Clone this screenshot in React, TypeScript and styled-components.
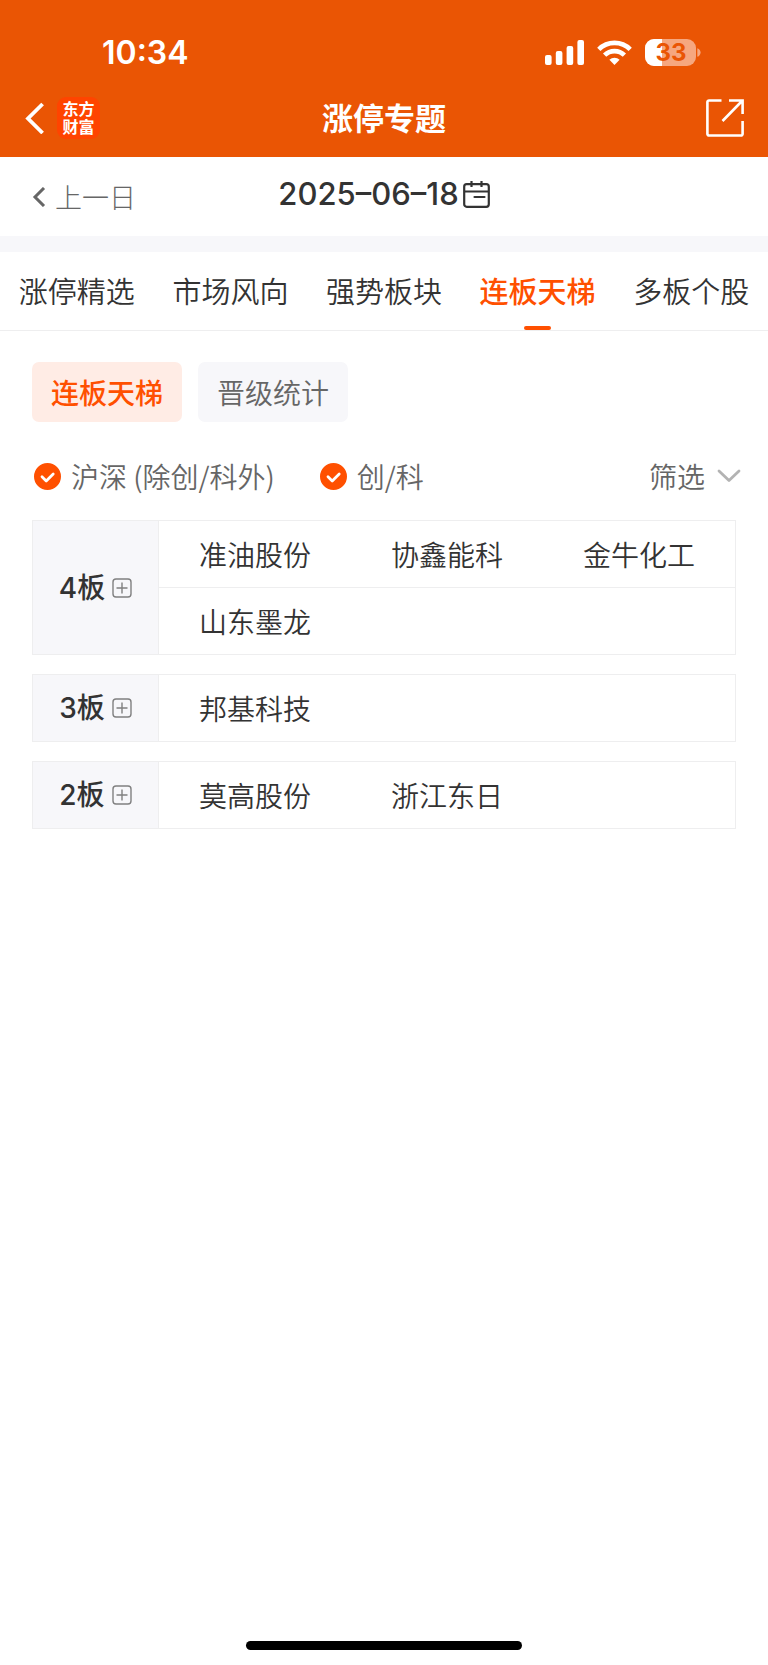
import React, { useState } from "react";
import styled, { createGlobalStyle } from "styled-components";

const color = {
  header: "#ea5504",
  accent: "#ff5000",
  accentSoft: "#ffece5",
  ink: "#333333",
  muted: "#666666",
  faint: "#b3b3b3",
  panel: "#f7f7fa",
  line: "#eeeeef",
};

const latin = `Inter, "Noto Sans CJK SC", sans-serif`;

const GlobalStyle = createGlobalStyle`
  *, *::before, *::after { box-sizing: border-box; }
  body {
    margin: 0;
    background: #fff;
    color: ${color.ink};
    font-family: "Noto Sans CJK SC", Inter, sans-serif;
    font-size: 28px;
    font-weight: 350;
    line-height: 40px;
  }
  button {
    margin: 0;
    padding: 0;
    border: 0;
    background: none;
    color: inherit;
    font: inherit;
    cursor: pointer;
  }
  svg { display: block; flex: none; }
`;

const Page = styled.div`
  min-height: 100vh;
  display: flex;
  flex-direction: column;
`;

const Header = styled.header`
  background: ${color.header};
  color: #fff;
`;

const StatusBar = styled.div`
  display: flex;
  align-items: center;
  justify-content: space-between;
  height: 79px;
  padding: 25px 67px 0 102px;
`;

const Clock = styled.time`
  padding-top: 2px;
  font-family: ${latin};
  font-size: 32px;
  font-weight: 600;
`;

const StatusIcons = styled.div`
  display: flex;
  align-items: center;
  gap: 13px;
`;

const NavBar = styled.div`
  display: grid;
  grid-template-columns: 1fr auto 1fr;
  align-items: center;
  height: 78px;
  padding: 0 24px;
`;

const NavStart = styled.div`
  display: flex;
  align-items: center;
  gap: 12px;
`;

const NavEnd = styled.div`
  display: flex;
  justify-content: flex-end;
`;

const Logo = styled.a`
  display: block;
  width: 43px;
  height: 42px;
  padding: 3px 5px;
  border-radius: 9px;
  background: #ff4400;
  color: #fff;
  font-family: ${latin};
  font-size: 16px;
  font-weight: 700;
  line-height: 18px;
  text-align: center;
  text-decoration: none;
`;

const Title = styled.h1`
  margin: 0;
  padding-bottom: 2px;
  font-size: 31px;
  font-weight: 700;
`;

const DateBar = styled.div`
  display: grid;
  grid-template-columns: 1fr auto 1fr;
  align-items: start;
  height: 79px;
  padding: 17px 32px 0;
`;

const PreviousDay = styled.button`
  display: flex;
  align-items: center;
  justify-self: start;
  gap: 9px;
  padding-top: 3px;
  color: ${color.muted};
  font-size: 27px;
  font-weight: 300;
`;

const DateButton = styled.button`
  display: flex;
  align-items: center;
  gap: 4px;
  font-family: ${latin};
  font-size: 31px;
  font-weight: 500;
`;

const Divider = styled.div`
  height: 16px;
  background: ${color.panel};
`;

const Tabs = styled.nav`
  display: flex;
  height: 79px;
  border-bottom: 1px solid ${color.line};
`;

const Tab = styled.a<{ $active?: boolean }>`
  flex: 1;
  display: flex;
  flex-direction: column;
  align-items: center;
  justify-content: space-between;
  padding-top: 18px;
  color: ${(p) => (p.$active ? color.accent : color.ink)};
  font-size: 29px;
  font-weight: ${(p) => (p.$active ? 500 : 350)};
  text-decoration: none;
  white-space: nowrap;

  &::after {
    content: "";
    width: 27px;
    height: 4px;
    border-radius: 2px;
    background: ${(p) => (p.$active ? color.accent : "transparent")};
  }
`;

const Content = styled.main`
  flex: 1;
  padding: 31px 32px 0;
`;

const Pills = styled.div`
  display: flex;
  gap: 16px;
`;

const Pill = styled.button<{ $active?: boolean }>`
  width: 150px;
  height: 60px;
  border-radius: 7px;
  background: ${(p) => (p.$active ? color.accentSoft : color.panel)};
  color: ${(p) => (p.$active ? color.accent : color.muted)};
  font-weight: ${(p) => (p.$active ? 500 : 350)};
`;

const Filters = styled.div`
  display: flex;
  align-items: center;
  gap: 45px;
  padding: 34px 0 24px 2px;
  color: ${color.muted};
`;

const CheckLabel = styled.label`
  display: flex;
  align-items: center;
  gap: 10px;
  cursor: pointer;
`;

const CheckBox = styled.span`
  display: grid;

  > * { grid-area: 1 / 1; }
  > svg { pointer-events: none; }
`;

const CheckInput = styled.input`
  appearance: none;
  width: 27px;
  height: 27px;
  margin: 0;
  border: 2px solid ${color.faint};
  border-radius: 50%;

  &:checked {
    border-color: ${color.accent};
    background: ${color.accent};
  }
`;

const FilterButton = styled.button`
  display: flex;
  align-items: center;
  gap: 12px;
  margin: 0 -5px 0 auto;
`;

const Ladder = styled.div`
  display: grid;
  gap: 19px;
`;

const BoardTable = styled.table`
  width: 100%;
  table-layout: fixed;
  border-collapse: collapse;
`;

const BoardHead = styled.th`
  width: 126px;
  padding: 0;
  border: 1px solid ${color.line};
  background: ${color.panel};
  font-family: ${latin};
  font-weight: 500;
`;

const BoardToggle = styled.button`
  display: flex;
  align-items: center;
  justify-content: center;
  gap: 7px;
  width: 100%;
`;

const StockCell = styled.td`
  height: 67px;
  padding: 0;
  border: solid ${color.line};
  border-width: 1px 0;
  text-align: center;

  &:last-child { border-right-width: 1px; }
`;

const StockLink = styled.a`
  color: inherit;
  text-decoration: none;
`;

const HomeArea = styled.footer`
  display: flex;
  justify-content: center;
  padding: 16px 0 15px;
`;

const HomeIndicator = styled.div`
  width: 36%;
  height: 9px;
  border-radius: 5px;
  background: #000;
`;

const SignalIcon = () => (
  <svg width="39" height="25" viewBox="0 0 39 25" fill="#fff" aria-hidden="true">
    <rect x="0" y="15" width="6.6" height="10" rx="2" />
    <rect x="10.8" y="11" width="6.6" height="14" rx="2" />
    <rect x="21.6" y="6" width="6.6" height="19" rx="2" />
    <rect x="32.4" y="0" width="6.6" height="25" rx="2" />
  </svg>
);

const WifiIcon = () => (
  <svg width="35" height="25" viewBox="0 0 35 25" aria-hidden="true">
    <g fill="none" stroke="#fff" strokeWidth="4.6">
      <path d="M1.8 9.3a22.3 22.3 0 0 1 31.4 0" />
      <path d="M7.6 15.2a14 14 0 0 1 19.8 0" />
    </g>
    <path fill="#fff" d="M17.5 25l-5.1-5.2a7.3 7.3 0 0 1 10.2 0z" />
  </svg>
);

const BatteryIcon = () => (
  <svg width="56" height="27" viewBox="0 0 56 27" role="img" aria-label="33%">
    <rect width="51" height="27" rx="9" fill="#f6a77f" />
    <path fill="#fff" d="M9 0h8v27H9a9 9 0 0 1-9-9V9a9 9 0 0 1 9-9z" />
    <path fill="#f6a77f" d="M52.3 9.2c4.4 1.2 4.4 7.4 0 8.6z" />
    <text
      x="26"
      y="22"
      textAnchor="middle"
      fill={color.header}
      fontFamily="Inter, sans-serif"
      fontSize="24"
      fontWeight="700"
    >
      33
    </text>
  </svg>
);

const BackIcon = () => (
  <svg width="21" height="32" viewBox="0 0 21 32" fill="none" stroke="#fff" strokeWidth="3.8" aria-hidden="true">
    <path d="M18.6 2L4 16.500l14.600 14.500" />
  </svg>
);

const ShareIcon = () => (
  <svg width="38" height="38" viewBox="0 0 38 38" fill="none" stroke="#fff" strokeWidth="2.600" aria-hidden="true">
    <path d="M15.500 1.500H3a1.600 1.600 0 0 0-1.600 1.600v31.800A1.600 1.600 0 0 0 3 36.500h32a1.600 1.600 0 0 0 1.600-1.600V22" />
    <path d="M23 1.500h13.600V15M36 2L16.500 22" />
  </svg>
);

const PreviousIcon = () => (
  <svg width="14" height="20" viewBox="0 0 14 20" fill="none" stroke="#666" strokeWidth="3" aria-hidden="true">
    <path d="M12 1L3 10l9 9" />
  </svg>
);

const CalendarIcon = () => (
  <svg width="27" height="27" viewBox="0 0 27 27" fill="none" stroke="#333" strokeWidth="2.200" aria-hidden="true">
    <rect x="1.200" y="3.200" width="24.600" height="22.600" rx="2.500" />
    <path d="M1.200 10.500h24.600M8.500 0v6M18.500 0v6" />
    <path d="M11.500 16h10" strokeLinecap="round" />
  </svg>
);

const TickIcon = () => (
  <svg width="27" height="27" viewBox="0 0 27 27" fill="none" stroke="#fff" strokeWidth="2.800" strokeLinecap="round" strokeLinejoin="round" aria-hidden="true">
    <path d="M8 13.800l4.200 4.100 7-7" />
  </svg>
);

const ChevronDownIcon = () => (
  <svg width="24" height="14" viewBox="0 0 24 14" fill="none" stroke="#b3b3b3" strokeWidth="2.800" strokeLinecap="round" strokeLinejoin="round" aria-hidden="true">
    <path d="M2 2l10 9.600L22 2" />
  </svg>
);

const PlusBoxIcon = () => (
  <svg width="20" height="20" viewBox="0 0 20 20" fill="none" stroke="#808080" strokeWidth="1.400" aria-hidden="true">
    <rect x="1" y="1" width="18" height="18" rx="3" />
    <path d="M4.500 10h11M10 4.500v11" />
  </svg>
);

const tabs = ["涨停精选", "市场风向", "强势板块", "连板天梯", "多板个股"];
const views = ["连板天梯", "晋级统计"];
const markets = ["沪深 (除创/科外)", "创/科"];
const boards = [
  { name: "4板", rows: [["准油股份", "协鑫能科", "金牛化工"], ["山东墨龙", "", ""]] },
  { name: "3板", rows: [["邦基科技", "", ""]] },
  { name: "2板", rows: [["莫高股份", "浙江东日", ""]] },
];

function MarketCheck({ label }: { label: string }) {
  const [checked, setChecked] = useState(true);
  return (
    <CheckLabel>
      <CheckBox>
        <CheckInput type="checkbox" checked={checked} onChange={(e) => setChecked(e.target.checked)} />
        <TickIcon />
      </CheckBox>
      {label}
    </CheckLabel>
  );
}

function Board({ name, rows }: { name: string; rows: string[][] }) {
  return (
    <BoardTable>
      <tbody>
        {rows.map((row, r) => (
          <tr key={r}>
            {r === 0 && (
              <BoardHead scope="rowgroup" rowSpan={rows.length}>
                <BoardToggle type="button">
                  {name}
                  <PlusBoxIcon />
                </BoardToggle>
              </BoardHead>
            )}
            {row.map((stock, c) => (
              <StockCell key={c}>{stock && <StockLink href="#">{stock}</StockLink>}</StockCell>
            ))}
          </tr>
        ))}
      </tbody>
    </BoardTable>
  );
}

export default function App() {
  const [view, setView] = useState(views[0]);
  return (
    <Page>
      <GlobalStyle />
      <Header>
        <StatusBar>
          <Clock>10:34</Clock>
          <StatusIcons>
            <SignalIcon />
            <WifiIcon />
            <BatteryIcon />
          </StatusIcons>
        </StatusBar>
        <NavBar>
          <NavStart>
            <button type="button" aria-label="返回">
              <BackIcon />
            </button>
            <Logo href="#">
              东方
              <br />
              财富
            </Logo>
          </NavStart>
          <Title>涨停专题</Title>
          <NavEnd>
            <button type="button" aria-label="分享">
              <ShareIcon />
            </button>
          </NavEnd>
        </NavBar>
      </Header>
      <DateBar>
        <PreviousDay type="button">
          <PreviousIcon />
          上一日
        </PreviousDay>
        <DateButton type="button">
          2025–06–18
          <CalendarIcon />
        </DateButton>
      </DateBar>
      <Divider />
      <Tabs>
        {tabs.map((tab) => (
          <Tab key={tab} href="#" $active={tab === "连板天梯"}>
            {tab}
          </Tab>
        ))}
      </Tabs>
      <Content>
        <Pills>
          {views.map((v) => (
            <Pill key={v} type="button" $active={v === view} onClick={() => setView(v)}>
              {v}
            </Pill>
          ))}
        </Pills>
        <Filters>
          {markets.map((m) => (
            <MarketCheck key={m} label={m} />
          ))}
          <FilterButton type="button">
            筛选
            <ChevronDownIcon />
          </FilterButton>
        </Filters>
        <Ladder>
          {boards.map((b) => (
            <Board key={b.name} {...b} />
          ))}
        </Ladder>
      </Content>
      <HomeArea>
        <HomeIndicator />
      </HomeArea>
    </Page>
  );
}
